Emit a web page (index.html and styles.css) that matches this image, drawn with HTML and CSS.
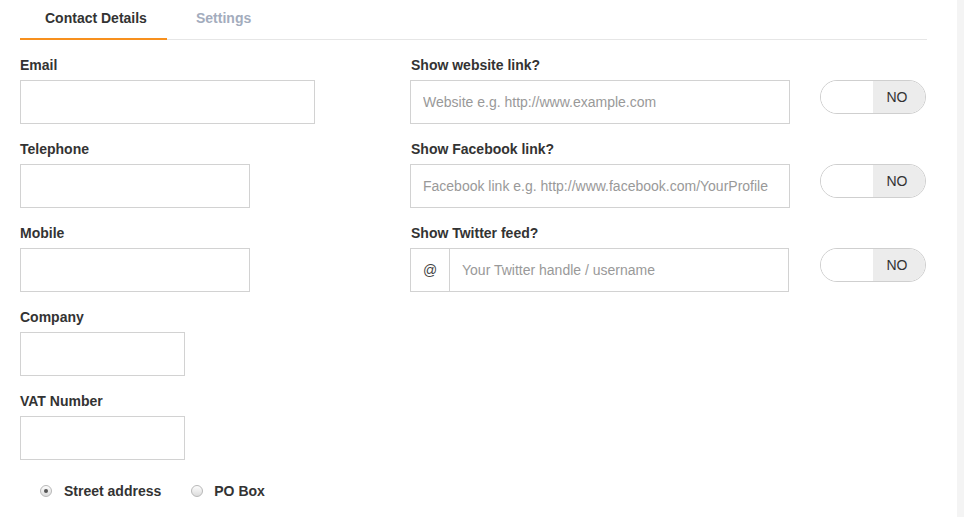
FILE: index.html
```html
<!DOCTYPE html>
<html>
<head>
<meta charset="utf-8">
<link rel="stylesheet" href="styles.css">
</head>
<body>
<div class="page">
  <div class="main">
    <nav class="tabs">
      <a class="tab active">Contact Details</a>
      <a class="tab settings">Settings</a>
    </nav>
    <div class="form">
      <div class="col-left">
        <div class="field">
          <label class="label">Email</label>
          <input class="input w-email" type="text">
        </div>
        <div class="field">
          <label class="label">Telephone</label>
          <input class="input w-phone" type="text">
        </div>
        <div class="field">
          <label class="label">Mobile</label>
          <input class="input w-phone" type="text">
        </div>
        <div class="field">
          <label class="label">Company</label>
          <input class="input w-small" type="text">
        </div>
        <div class="field">
          <label class="label">VAT Number</label>
          <input class="input w-small" type="text">
        </div>
        <div class="radios">
          <span class="radio checked"></span><span class="radio-label">Street address</span>
          <span class="radio po"></span><span class="radio-label">PO Box</span>
        </div>
      </div>
      <div class="col-right">
        <div class="field">
          <label class="label">Show website link?</label>
          <div class="row">
            <input class="input w-link" type="text" placeholder="Website e.g. http://www.example.com">
            <div class="toggle"><span class="toggle-off"></span><span class="toggle-no">NO</span></div>
          </div>
        </div>
        <div class="field">
          <label class="label">Show Facebook link?</label>
          <div class="row">
            <input class="input w-link" type="text" placeholder="Facebook link e.g. http://www.facebook.com/YourProfile">
            <div class="toggle"><span class="toggle-off"></span><span class="toggle-no">NO</span></div>
          </div>
        </div>
        <div class="field">
          <label class="label">Show Twitter feed?</label>
          <div class="row">
            <div class="group">
              <span class="addon">@</span>
              <input class="input w-twitter" type="text" placeholder="Your Twitter handle / username">
            </div>
            <div class="toggle"><span class="toggle-off"></span><span class="toggle-no">NO</span></div>
          </div>
        </div>
      </div>
    </div>
  </div>
  <div class="edge"></div>
</div>
</body>
</html>
```
FILE: styles.css
```css
* { box-sizing: border-box; }
html, body { margin: 0; padding: 0; background: #fff; }
body {
  font-family: "Liberation Sans", Arial, sans-serif;
  color: #333;
  font-size: 14px;
}
.page {
  display: flex;
  min-height: 517px;
}
.main {
  flex: 1;
  padding: 0 30px 0 20px;
}
.edge {
  width: 7px;
  background: #f4f4f4;
}
.tabs {
  display: flex;
  height: 40px;
  border-bottom: 1px solid #e6e6e6;
}
.tab {
  display: block;
  height: 40px;
  line-height: 37px;
  font-weight: bold;
  font-size: 14px;
  color: #333;
  padding: 0 0 0 25px;
  margin-bottom: -1px;
}
.tab.active {
  border-bottom: 2px solid #f7901e;
  width: 147px;
}
.tab.settings {
  color: #a3acbd;
  padding-left: 29px;
}
.form {
  display: flex;
  padding-top: 17px;
}
.col-left { width: 390px; }
.col-right { flex: 1; }
.field { margin-bottom: 17px; }
.label {
  display: block;
  font-weight: bold;
  font-size: 14px;
  line-height: 17px;
  margin-bottom: 6px;
  color: #333;
}
.col-right .label { padding-left: 1px; }
.input {
  display: block;
  height: 44px;
  border: 1px solid #d2d2d2;
  background: #fff;
  font-family: "Liberation Sans", Arial, sans-serif;
  font-size: 14px;
  padding: 0 12px;
  color: #333;
  outline: none;
}
.input::placeholder { color: #999; }
.w-email { width: 295px; }
.w-phone { width: 230px; }
.w-small { width: 165px; }
.w-link { width: 380px; }
.w-twitter { width: 339px; border-left: none; }
.row {
  display: flex;
  align-items: flex-start;
  gap: 30px;
}
.group { display: flex; width: 380px; }
.addon {
  display: flex;
  align-items: center;
  justify-content: center;
  width: 40px;
  height: 44px;
  border: 1px solid #d2d2d2;
  font-size: 14px;
  color: #444;
}
.toggle {
  display: flex;
  width: 106px;
  height: 34px;
  border: 1px solid #cfcfcf;
  border-radius: 17px;
  overflow: hidden;
}
.toggle-off { width: 52px; background: #fff; }
.toggle-no {
  flex: 1;
  background: #ececec;
  display: flex;
  align-items: center;
  justify-content: center;
  font-size: 14px;
  color: #333;
  padding-right: 4px;
}
.radios {
  display: flex;
  align-items: center;
  padding-left: 20px;
  margin-top: 14px;
  height: 28px;
}
.radio {
  width: 12px;
  height: 12px;
  border-radius: 50%;
  border: 1px solid #b8b8b8;
  background: linear-gradient(#fdfdfd, #dcdcdc);
  display: flex;
  align-items: center;
  justify-content: center;
  margin-right: 12px;
}
.radio.checked::after {
  content: "";
  width: 4px;
  height: 4px;
  border-radius: 50%;
  background: #555;
}
.radio.po { margin-left: 30px; margin-right: 11px; }
.radio-label {
  font-weight: bold;
  font-size: 14px;
  color: #333;
}
```
